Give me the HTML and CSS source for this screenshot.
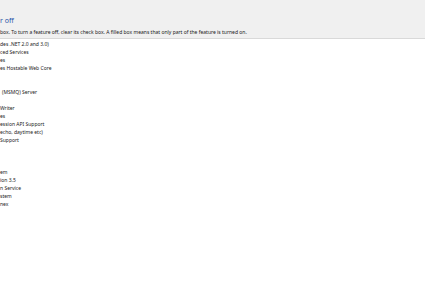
FILE: index.html
```html
<!DOCTYPE html>
<html>
<head>
<meta charset="utf-8">
<link rel="stylesheet" href="styles.css">
</head>
<body>
<div class="dialog">
  <header class="head">
    <h1 class="title">r off</h1>
    <p class="desc">box. To turn a feature off, clear its check box. A filled box means that only part of the feature is turned on.</p>
  </header>
  <ul class="features">
    <li>des .NET 2.0 and 3.0)</li>
    <li>ced Services</li>
    <li>es</li>
    <li>es Hostable Web Core</li>
    <li></li>
    <li></li>
    <li class="shift">(MSMQ) Server</li>
    <li></li>
    <li>Writer</li>
    <li>es</li>
    <li>ession API Support</li>
    <li>echo, daytime etc)</li>
    <li>Support</li>
    <li></li>
    <li></li>
    <li></li>
    <li>em</li>
    <li>ion 3.5</li>
    <li>n Service</li>
    <li>stem</li>
    <li>nex</li>
  </ul>
</div>
</body>
</html>
```
FILE: styles.css
```css
html, body {
  margin: 0;
  padding: 0;
  background: #ffffff;
}
body {
  width: 425px;
  height: 300px;
  overflow: hidden;
  font-family: "Noto Sans", "Open Sans", sans-serif;
  color: #1a1a1a;
}
.dialog {
  display: flex;
  flex-direction: column;
}
.head {
  background: #f0f0f0;
  border-bottom: 1px solid #d9d9d9;
  height: 39px;
  box-sizing: border-box;
  padding-top: 16px;
}
.title {
  margin: 0;
  font-size: 7px;
  line-height: 10px;
  font-weight: normal;
  color: #2553a8;
}
.desc {
  margin: 0;
  padding-top: 2px;
  font-size: 5px;
  line-height: 8px;
  color: #1a1a1a;
}
.features {
  list-style: none;
  margin: 0;
  padding: 1px 0 0 0;
}
.features li {
  height: 8px;
  font-size: 5px;
  line-height: 8px;
  white-space: nowrap;
}
.features li.shift {
  padding-left: 2px;
}
```
